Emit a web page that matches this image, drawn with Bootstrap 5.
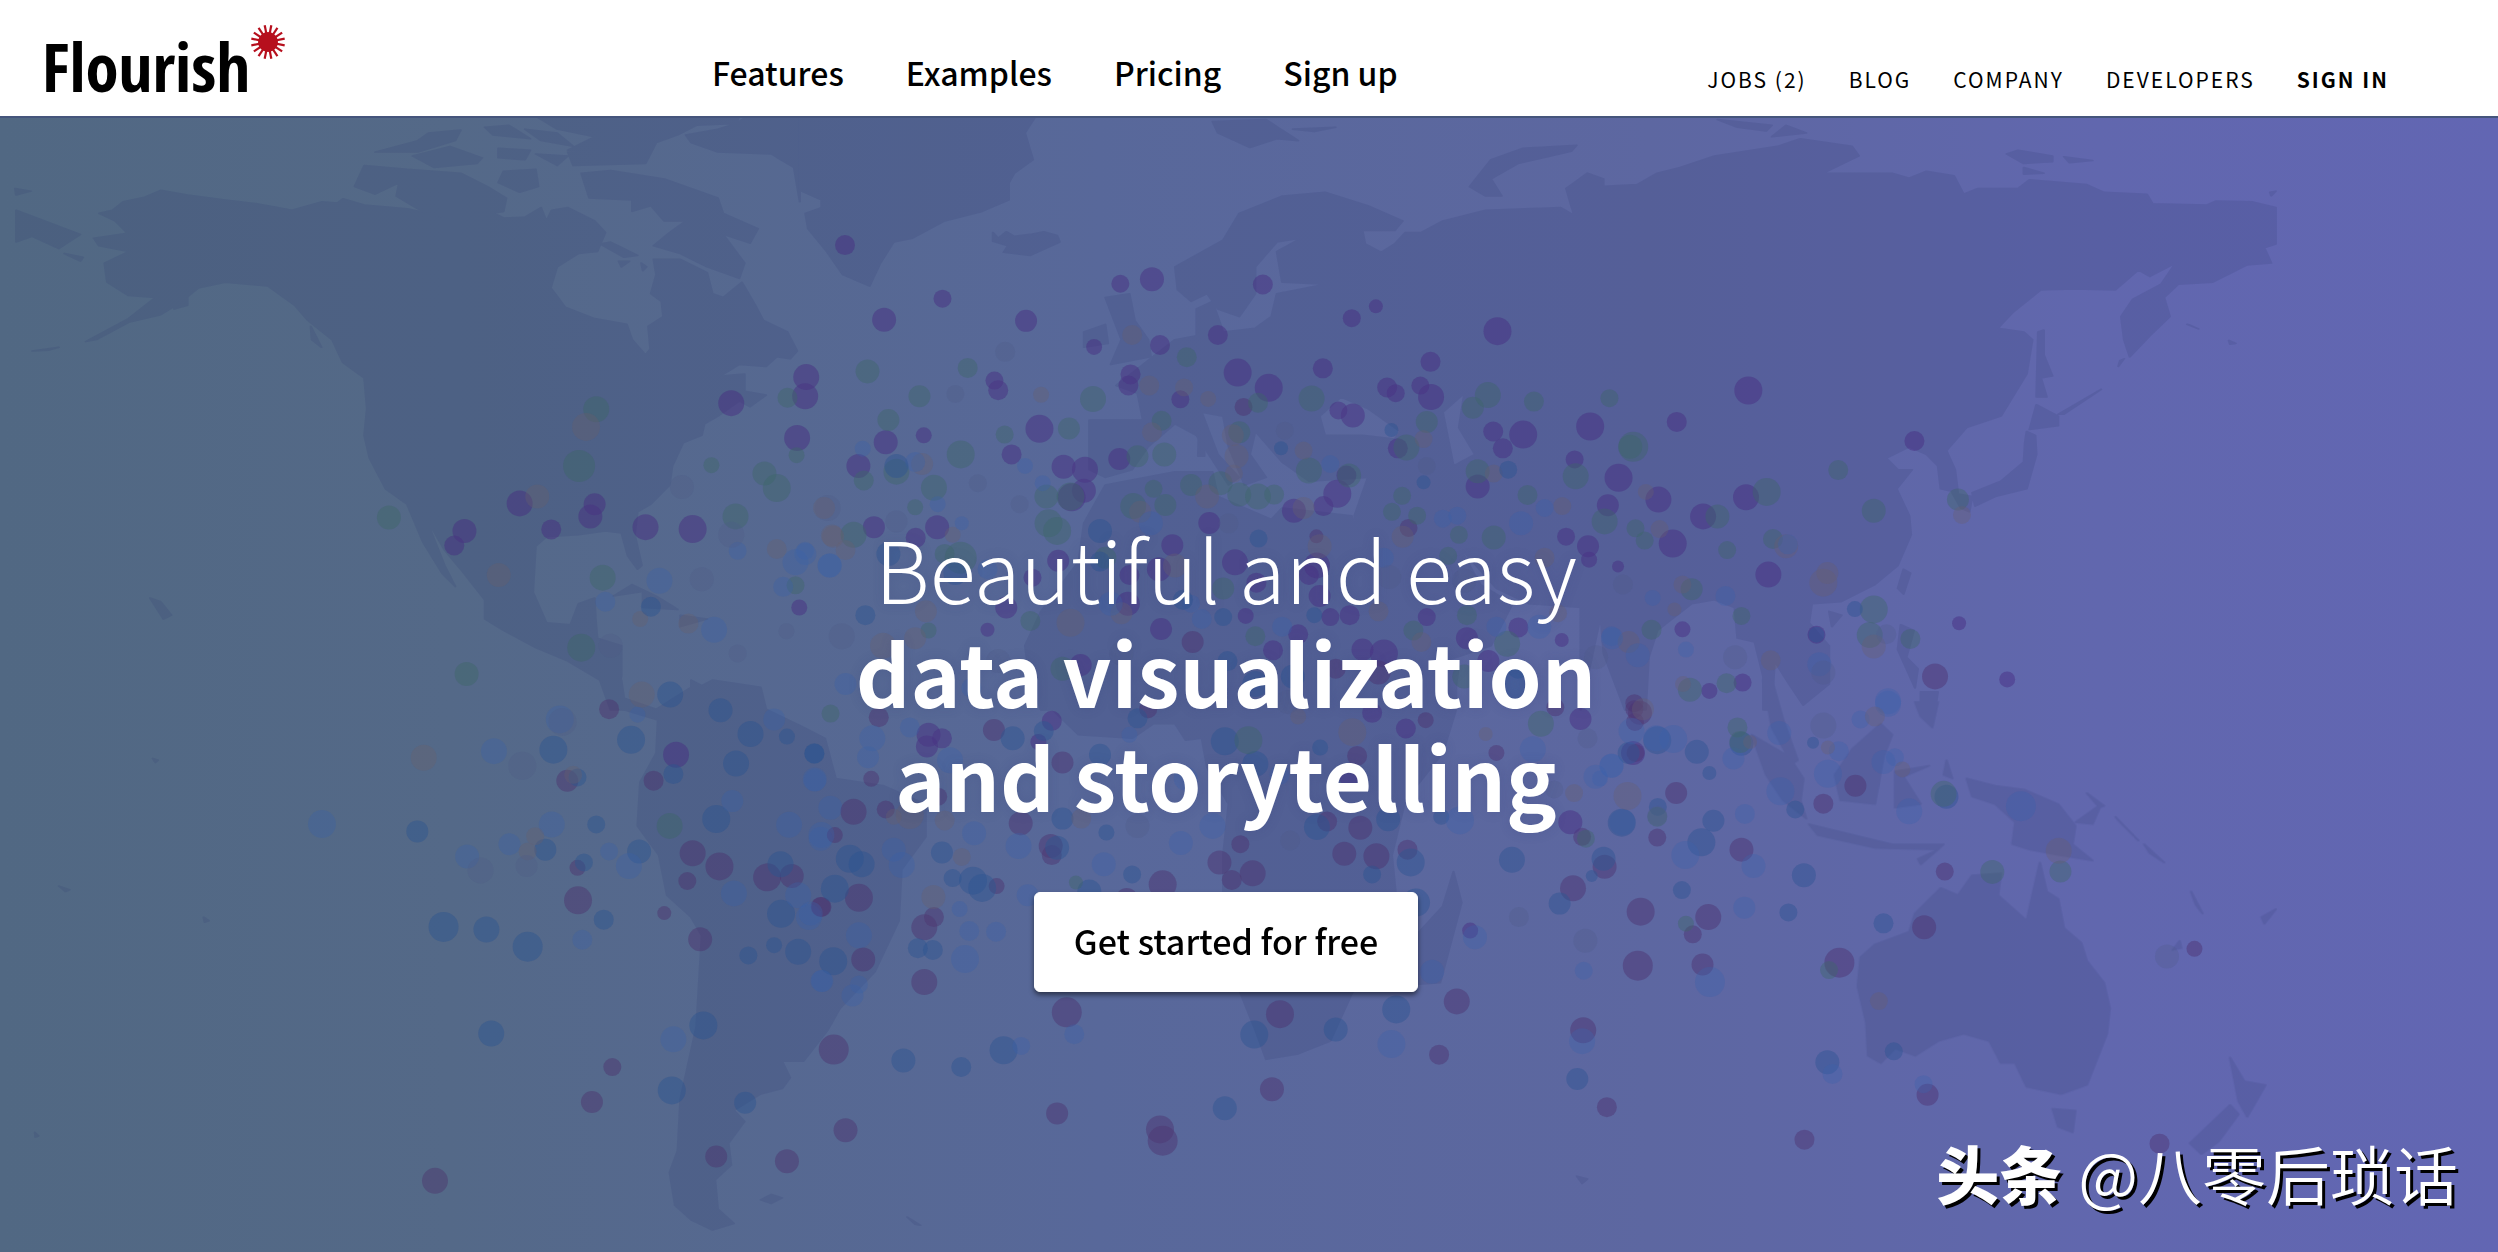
<!DOCTYPE html>
<html lang="en">
<head>
<meta charset="utf-8">
<meta name="viewport" content="width=device-width, initial-scale=1">
<title>Flourish</title>
<link href="https://cdn.jsdelivr.net/npm/bootstrap@5.3.0/dist/css/bootstrap.min.css" rel="stylesheet">
<style>
  body { font-family: "Noto Sans CJK SC", "Noto Sans", sans-serif; color: #000; }
  .site-header { height: 116px; padding: 0 109px 0 42px; }
  .brand-link { width: 670px; height: 116px; color: #000; }
  .brand-link:hover { color: #000; }
  .brand-name { font-family: "Open Sans Condensed", "Roboto Condensed", Roboto, sans-serif; font-weight: 700; font-size: 67px; line-height: 76px; padding-top: 28px; }
  .brand-mark { width: 36px; height: 36px; margin-top: 24px; }
  .main-links { gap: 62px; padding-top: 49px; }
  .main-links .nav-link { font-size: 32px; line-height: 46px; font-weight: 500; color: #000; padding: 0; }
  .side-links { gap: 42px; padding-top: 63px; }
  .side-links .nav-link { font-size: 21px; line-height: 32px; letter-spacing: 2px; color: #000; padding: 0; text-transform: uppercase; }
  .hero { background: linear-gradient(90deg, #516883 0%, #546988 18%, #58689a 44%, #5d67a1 66%, #6167ae 84%, #6266b3 100%); border-top: 2px solid #45557c; padding-right: 46px; }
  .hero-map { inset: 0; }
  .hero-title { font-size: 85px; line-height: 104px; font-weight: 700; margin: 0 0 65px; padding-top: 397px; text-shadow: 0 0 12px rgba(50, 60, 120, .2); }
  .hero-title .thin-line { font-weight: 200; }
  .start-btn, .start-btn:hover { background: #fff; color: #000; font-size: 34px; line-height: 48px; font-weight: 500; padding: 24px 39px 26px; border: 1px solid #fff; border-radius: 6px; box-shadow: 0 3px 5px rgba(0, 0, 0, .5); }
  .credit { right: 40px; bottom: 34px; gap: 16px; font-size: 64px; line-height: 92px; font-weight: 350; text-shadow: 3px 3px 0 #000; }
  .credit strong { font-weight: 900; font-size: 63px; }
</style>
</head>
<body class="d-flex flex-column min-vh-100">
<header class="site-header bg-white d-flex align-items-start">
  <a class="brand-link d-flex align-items-start text-decoration-none flex-shrink-0" href="#" aria-label="Flourish home">
    <span class="brand-name">Flourish</span>
    <svg class="brand-mark" viewBox="-18 -18 36 36" aria-hidden="true">
      <g id="burst" stroke="#b60f1d" stroke-width="2.2"></g>
      <circle r="10" fill="#b60f1d"/>
    </svg>
  </a>
  <nav aria-label="Main"><ul class="nav flex-nowrap main-links">
    <li><a class="nav-link" href="#">Features</a></li>
    <li><a class="nav-link" href="#">Examples</a></li>
    <li><a class="nav-link" href="#">Pricing</a></li>
    <li><a class="nav-link text-nowrap" href="#">Sign up</a></li>
  </ul></nav>
  <nav class="ms-auto" aria-label="Secondary"><ul class="nav flex-nowrap side-links">
    <li><a class="nav-link text-nowrap" href="#">Jobs (2)</a></li>
    <li><a class="nav-link" href="#">Blog</a></li>
    <li><a class="nav-link" href="#">Company</a></li>
    <li><a class="nav-link" href="#">Developers</a></li>
    <li><a class="nav-link fw-bold text-nowrap" href="#">Sign in</a></li>
  </ul></nav>
</header>

<main class="hero flex-grow-1 position-relative text-center text-white overflow-hidden">
  <svg class="hero-map position-absolute w-100 h-100" viewBox="0 118 2498 1134" preserveAspectRatio="xMidYMin slice" aria-hidden="true">
    <g fill="#303c74" stroke="#303c74" stroke-width="4" stroke-linejoin="round" fill-rule="evenodd" opacity=".17">
      <!-- North America and Greenland -->
      <g transform="translate(0 110) scale(.5357 .3827)">
        <path d="M185,270 210,262 230,240 270,228 300,210 350,222 420,235 480,245 545,262 600,240 630,243 640,232 680,248 760,258 800,270 830,282 920,268 940,282 980,280 1010,255 1020,290 1030,262 1060,255 1110,290 1130,320 1115,370 1080,375 1040,410 1028,465 1055,515 1110,545 1170,560 1180,600 1205,640 1214,625 1210,565 1238,540 1235,500 1215,480 1225,430 1220,390 1270,390 1320,425 1330,480 1350,490 1385,450 1410,510 1425,550 1470,580 1488,630 1475,650 1450,645 1430,670 1380,665 1345,695 1390,690 1390,735 1430,745 1400,775 1380,760 1340,800 1315,820 1310,850 1275,870 1255,930 1250,980 1215,1030 1190,1050 1185,1110 1198,1190 1190,1200 1172,1165 1160,1105 1130,1100 1080,1110 1020,1115 1000,1140 995,1260 1020,1340 1065,1345 1080,1290 1110,1275 1112,1330 1115,1380 1160,1400 1160,1480 1150,1530 1165,1568 1140,1568 1120,1490 1060,1440 1000,1405 940,1360 905,1330 905,1280 860,1200 830,1150 795,1065 810,1120 830,1190 850,1245 825,1210 790,1130 760,1030 720,990 690,910 680,850 685,780 680,700 640,660 620,600 575,550 550,510 500,460 420,450 370,465 340,500 300,535 240,555 180,600 160,605 240,545 290,490 240,485 200,450 195,400 240,370 185,355 175,335 238,322 215,290Z"/>
        <path d="M1085,165 1140,158 1240,180 1340,230 1350,270 1415,310 1400,348 1350,325 1390,400 1380,440 1320,410 1270,375 1220,355 1250,320 1280,290 1240,290 1215,250 1180,265 1180,235 1100,230Z M680,145 760,155 860,165 910,200 945,230 940,265 860,285 800,275 740,225 745,190 700,220 662,200Z M940,160 1000,155 1005,200 970,215 930,190Z M700,110 780,80 800,60 860,52 850,80 780,110Z M770,120 840,95 900,125 890,140 810,150Z M905,45 950,40 990,75 920,65Z M930,100 990,105 980,130 930,125Z M1000,115 1060,120 1040,145Z M980,50 1040,60 1070,95 1010,80Z M1000,16 1380,16 1375,35 1300,40 1265,65 1225,85 1205,140 1070,145 1060,110 1200,105 1060,105 1110,70 1040,50Z M1280,65 1340,50 1375,35 1395,16 1493,16 1493,240 1482,150 1440,115 1340,110 1290,85Z"/>
        <path d="M30,262 150,325 110,362 60,330 30,345Z M28,205 58,212 30,222Z M120,375 155,385 150,395Z M325,520 330,500 350,485 350,510Z M580,565 600,620 582,600Z M60,630 110,620 90,628Z M1145,1270 1180,1240 1225,1270 1265,1305 1200,1300 1200,1258Z M1270,1320 1320,1330 1270,1350Z M280,1275 300,1285 320,1320 305,1330Z M1120,350 1140,345 1190,380 1165,385Z M1155,395 1175,395 1160,410Z M1197,400 1207,410 1200,420Z"/>
      </g>
      <!-- Europe, west Asia and north Africa -->
      <g transform="translate(800 110) scale(.5357 .3827)">
        <path d="M0,16 440,16 420,60 435,130 400,165 390,190 390,235 340,265 270,290 210,335 175,345 150,400 130,460 80,430 50,370 15,310 10,270 40,255 40,235 0,210Z M360,320 370,335 385,318 400,330 430,325 455,318 480,328 485,345 430,380 380,372 388,355 360,343Z M770,30 870,25 930,80 890,75 840,98 780,60Z M920,50 1000,45 960,56Z M1250,200 1290,130 1350,100 1450,92 1440,108 1340,140 1290,180 1310,225 1280,225Z M570,490 615,480 625,550 650,600 655,645 580,665 600,600Z M530,580 570,560 575,610 530,620Z M745,810 755,820 755,905 743,905Z"/>
        <path d="M705,470 700,410 790,340 820,270 900,225 980,215 1060,250 1125,290 1110,315 1050,315 1055,350 1085,372 1110,350 1130,320 1160,320 1200,290 1280,262 1420,255 1445,275 1430,205 1470,165 1500,180 1500,280 1515,220 1568,200 1568,1568 1540,1568 1500,1420 1495,1330 1460,1300 1360,1290 1300,1250 1230,1140 1270,1240 1330,1290 1290,1400 1140,1470 1100,1380 1050,1180 1035,1060 1060,960 950,970 900,920 850,840 840,900 870,960 830,980 800,880 790,800 750,790 780,900 820,960 800,980 740,850 700,820 650,880 620,940 570,960 540,940 540,810 640,810 630,740 590,720 700,600 740,590 740,520 770,500 790,580 850,570 880,540 890,480 980,455 900,450 890,370 935,335 890,345 850,410 850,480 820,540 780,520 760,480 730,500Z M980,850 970,800 1010,750 1060,780 1120,840 1110,860 1050,850Z M1200,790 1240,740 1230,830 1260,900 1220,930Z"/>
        <path d="M570,980 700,945 770,945 780,1010 880,1070 900,1040 1030,1060 1060,1180 1120,1390 1150,1460 1230,1450 1225,1500 1210,1568 450,1568 430,1500 420,1400 450,1310 520,1180 530,1080Z"/>
      </g>
      <!-- East Asia -->
      <g transform="translate(1600 110) scale(.5727 .3827)">
        <path d="M65,195 100,165 140,150 200,120 310,95 350,75 440,95 452,120 390,165 510,165 540,178 570,160 618,172 635,220 660,205 730,205 750,182 850,195 880,215 955,220 965,245 1060,248 1075,238 1140,240 1180,255 1180,350 1160,360 1172,400 1130,405 1070,450 1010,455 985,490 995,540 960,590 925,645 915,600 910,540 930,495 980,455 1005,400 960,435 940,418 900,470 830,468 770,470 720,530 695,570 740,580 755,600 745,690 700,800 640,830 605,890 620,940 625,1000 595,990 590,930 570,900 540,880 500,910 520,940 545,940 518,990 540,1060 543,1110 520,1190 480,1240 420,1285 370,1290 365,1340 400,1400 400,1500 355,1555 330,1500 305,1440 300,1568 285,1568 285,1480 270,1390 240,1380 235,1300 200,1280 160,1290 100,1360 85,1430 80,1568 45,1568 20,1430 0,1330 -34,1568 -34,200 0,200Z"/>
        <path d="M765,580 775,575 775,640 790,695 770,700 780,750 762,750Z M762,770 800,800 800,825 750,835Z M745,840 760,850 762,900 745,990 690,1010 655,1035 650,1000 700,970 740,920 742,870Z M615,1000 650,1010 645,1050 630,1040Z M875,730 810,795 800,795Z M915,650 905,670 908,655Z M530,1200 542,1210 530,1265 520,1250Z M525,1345 548,1360 535,1430 555,1460 550,1510 520,1410Z M560,1520 590,1520 585,1568 560,1550Z M400,1310 422,1320 405,1350Z M710,115 730,105 790,120 790,135 740,140Z M810,122 860,132 820,138Z M205,25 300,40 290,55 240,45Z M300,70 325,40 360,60Z M740,150 775,165 740,168Z M1170,215 1180,212 1172,224Z M1025,560 1045,572 1030,562Z M1098,602 1110,610 1100,612Z"/>
      </g>
      <!-- South America -->
      <g transform="translate(0 680) scale(.5357 .3648)">
        <path d="M1125,0 1160,0 1165,50 1225,80 1290,20 1290,0 1310,15 1330,0 1420,20 1430,80 1500,130 1540,160 1560,270 1650,290 1728,340 1728,430 1683,520 1678,660 1633,800 1568,900 1545,960 1500,1045 1460,1045 1475,1090 1460,1120 1420,1135 1370,1180 1390,1210 1360,1270 1365,1330 1335,1370 1340,1450 1370,1490 1330,1508 1290,1480 1260,1440 1250,1350 1265,1290 1270,1150 1300,950 1310,700 1290,650 1245,590 1230,480 1190,400 1195,280 1225,200 1228,110 1160,80Z M1420,1425 1440,1410 1460,1420 1440,1435Z M285,215 295,220 290,226Z M110,565 130,575 122,580Z M65,1240 72,1250 66,1253Z M380,650 390,660 382,664Z"/>
      </g>
      <!-- Southern Africa and Madagascar -->
      <g transform="translate(800 680) scale(.5357 .3648)">
        <path d="M450,0 470,80 520,150 620,160 660,120 700,120 720,165 750,160 760,240 800,340 790,480 790,640 820,850 850,960 870,1040 930,1025 990,990 1030,860 1060,800 1120,700 1105,480 1130,330 1200,200 1225,80 1225,0Z M1220,525 1235,610 1195,830 1150,835 1150,700 1200,620Z M200,1472 225,1495 215,1492Z M1450,1360 1470,1368 1460,1380Z"/>
      </g>
      <!-- South-east Asia and Oceania -->
      <g transform="translate(1600 680) scale(.5727 .3648)">
        <path d="M455,760 480,725 540,690 550,640 595,570 625,590 650,535 700,530 695,590 745,660 755,590 768,500 780,580 800,600 810,680 840,720 850,770 880,830 890,900 885,970 850,1110 805,1135 745,1115 725,1050 700,1050 680,990 635,970 590,990 550,1030 515,1010 490,1050 468,1030 465,940 450,840Z M790,1175 830,1180 825,1240 800,1225Z M1100,1035 1125,1100 1162,1110 1130,1197 1115,1155Z M1100,1165 1115,1190 1080,1265 1050,1300 1030,1270Z"/>
        <path d="M285,0 300,0 320,110 345,220 335,230 300,130Z M265,150 330,210 355,270 350,330 360,380 320,330 290,260Z M365,395 430,420 510,450 600,450 590,465 480,460 380,425Z M440,190 490,120 510,150 495,210 480,340 420,330 410,260Z M515,250 575,235 530,265 560,340 515,350Z M555,490 590,465 560,505Z M605,220 615,270 600,260Z M640,270 690,290 740,300 800,340 830,400 825,450 860,495 800,480 750,465 720,450 725,390 690,340 650,320Z M550,60 590,60 580,130 560,100Z M830,390 875,340 860,395Z M850,310 880,345 872,350Z M900,375 940,440 905,385Z M950,450 985,500 960,475Z M1032,580 1052,640 1040,615Z M1000,740 1012,715 1015,735Z M1155,650 1180,628 1160,668Z M45,0 80,0 75,80 55,90Z"/>
      </g>
    </g>
    <g id="dots" opacity=".8"></g>
  </svg>

  <div class="position-relative">
    <h1 class="hero-title"><span class="thin-line">Beautiful and easy</span><br>data visualization<br>and storytelling</h1>
    <a class="btn start-btn" href="#">Get started for free</a>
  </div>

  <div class="credit position-absolute d-flex text-nowrap"><strong>头条</strong><span>@八零后琐话</span></div>
</main>

<script src="https://cdn.jsdelivr.net/npm/bootstrap@5.3.0/dist/js/bootstrap.bundle.min.js"></script>
<script>
  const NS = 'http://www.w3.org/2000/svg';
  const burst = document.getElementById('burst');
  for (let i = 0; i < 16; i++) {
    const l = document.createElementNS(NS, 'line');
    l.setAttribute('y2', -17);
    l.setAttribute('transform', `rotate(${11.25 + i * 22.5})`);
    burst.append(l);
  }

  // Each region has an origin, a scale, and lists of x,y,radius by colour.
  const colours = {
    purple: ['#46297f', .54], plum: ['#4b2c6a', .5], green: ['#3a6660', .44], brown: ['#6b5d66', .36],
    deep: ['#265290', .48], blue: ['#3562ac', .34], grey: ['#4d5987', .32]
  };
  const regions = [
    { at: [0, 110], scale: [.5357, .3827], dots: {
      purple: '1365,766,13 1505,698,13 1503,748,13 1488,857,13 970,1028,13 1110,1030,11 1102,1062,12 1029,1096,10 867,1100,12 848,1138,10 1205,1090,13 1293,1095,14 1492,1300,8',
      green: '1113,782,13 1081,930,16 726,1065,12 1125,1222,13 1085,1405,14 871,1474,12 1470,752,10 1487,902,8 1328,928,8 1427,950,12 1450,988,14 1373,1062,13 1485,1242,9',
      brown: '1094,828,14 1003,1010,12 931,1215,12 1450,1147,10 1553,1112,11 1195,1330,8 1285,1342,10',
      blue: '1377,1152,9 1485,1182,13 1503,1152,9 1549,1190,12 1231,1230,13 1462,1246,10 1130,1285,10 1333,1358,13',
      deep: '1215,1298,10', grey: '1273,985,12 1365,1110,13 1310,1226,12 1377,1420,9 1140,1400,12 1468,1362,8 1545,1040,13' } },
    { at: [800, 110], scale: [.5357, .3827], dots: {
      purple: '84,353,10 266,493,9 157,548,12 422,551,11 598,454,9 657,442,12 864,456,10 1030,544,9 1075,513,7 1302,578,14 780,588,10 672,614,10 549,619,8 976,675,10 1177,658,10 817,686,14 875,726,14 617,691,10 613,720,10 363,707,9 370,732,10 710,756,9 1096,725,10 1112,740,9 1158,720,9 1178,750,13 1005,785,9 1032,798,12 231,850,8 160,868,12 447,833,14 395,900,10 109,930,12 492,932,12 532,940,13 507,1012,14 530,995,12 596,912,11 1116,884,10 1294,840,10 1350,848,14 1312,884,10 1475,827,14 1446,913,9 1528,961,14 1265,984,12 1003,1003,14 1020,955,10 922,1047,12 977,1035,10 764,1079,11 138,1090,11 256,1090,12 216,1118,10 695,1137,11 482,1178,11 812,1182,13 434,1222,9 615,1215,10 670,1200,12 965,1190,13 852,1235,10 950,1215,10 970,1270,11 1508,1033,11 1430,1115,9 1471,1140,11 1473,1175,8 1527,1193,6 612,1290,12 385,1300,11 350,1358,7 674,1356,11 832,1322,8 990,1325,9 1026,1320,10 1170,1325,9 930,1370,10 883,1412,10 1245,1380,11 1341,1352,10 1422,1385,7 524,1450,11 1090,1420,14 1050,1410,11 1285,1440,11',
      plum: '828,776,9 1136,1092,9 964,1114,7 733,1390,11 1080,1470,12 1000,1460,10',
      green: '126,683,12 313,674,10 223,748,11 165,810,11 547,755,13 722,646,10 855,765,10 955,754,13 1284,745,13 1256,778,11 1370,762,10 1511,753,9 382,848,9 502,832,11 300,900,14 180,945,13 250,987,13 119,968,10 675,812,10 680,900,12 630,905,11 820,842,11 1132,882,13 1170,815,11 950,942,13 1025,955,12 1265,944,12 1448,957,13 1358,1006,10 1550,880,12 460,1010,12 464,1080,14 480,1100,14 505,1010,14 622,1035,13 682,1032,11 730,980,11 785,975,12 820,1005,12 855,1010,13 885,1005,10 660,990,9 215,1038,8 1124,1008,9 1105,1050,9 1152,1060,9 1230,1110,9 1295,1117,12 1502,1075,13 300,1170,16 270,1160,10 100,1110,13 430,1335,10 850,1375,10 790,1250,11 240,1360,8 570,1170,11 1245,1320,10 1145,1360,10 1320,1395,13 1210,1165,9 490,1460,12 1240,1480,12',
      brown: '620,588,10 652,720,10 717,725,9 450,744,8 762,755,8 657,842,10 808,850,11 815,905,12 810,950,9 760,1010,12 228,925,11 45,1040,11 62,1115,11 85,1150,10 285,1110,8 635,1050,11 940,890,9 1164,860,9 1295,950,9 1125,1115,11 1423,1035,9 1390,1170,10 940,1040,11 600,1315,11 505,1340,14 235,1310,11 155,1400,13 215,1380,11 1080,1310,10 1415,1315,9 970,1140,12 700,1190,12 1160,1390,10',
      blue: '10,1160,11 55,1190,12 302,1080,7 215,920,10 117,885,8 420,930,8 453,975,8 257,1030,8 990,925,9 1200,1068,9 1227,1060,9 1346,1080,12 1390,1040,9 1515,1375,10 655,1080,12 580,1290,12 730,1290,9 85,1500,11 320,1510,10 1380,1350,12 1300,1350,10 1090,1170,10 750,1330,10 350,1200,10 900,1350,10',
      deep: '898,884,7 1164,973,7 1322,940,9 180,930,12 122,1320,10 165,1160,12 290,1210,12 856,1120,9 790,1325,9 560,1100,12 1104,836,7 715,1280,10 1338,1500,15 920,1480,12 798,1440,10 850,1500,13 960,1320,8 560,1180,10 1340,1460,10',
      grey: '383,632,10 290,742,9 332,975,9 410,1030,9 905,838,9 1170,930,9 180,1075,11 78,1375,13 800,1080,10 1486,1430,12 370,1440,12 1100,1220,12 1240,1230,12 600,1420,12' } },
    { at: [1600, 110], scale: [.5727, .3827], dots: {
      purple: '259,733,14 134,815,10 549,865,10 255,1012,13 180,1062,13 127,1133,14 294,1214,13 102,1018,13 144,1357,8 627,1341,7 711,1488,8 249,1496,9 191,1518,8 378,1371,9',
      plum: '585,1480,13 60,1550,9',
      green: '58,880,15 416,941,10 291,998,14 478,1047,12 205,1062,12 625,1018,11 302,1121,10 222,1150,9 62,1093,9 78,1125,9 160,1252,11 247,1322,9 478,1305,14 471,1372,13 542,1382,10 90,1358,10 157,1515,12 221,1498,10',
      brown: '632,1058,9 80,998,8 104,1095,9 325,1140,12 390,1235,14 397,1210,11 478,1402,12 144,1240,9 298,1438,10 130,1305,7 50,1390,11 145,1500,8',
      blue: '219,1270,10 92,1275,8 21,1380,11 66,1425,12 150,1410,8 383,1448,12 503,1545,13 328,1135,10',
      deep: '445,1304,8 378,1371,8', grey: '236,1430,12 390,1470,12 500,1370,10 40,1240,10' } },
    { at: [0, 680], scale: [.5357, .3648], dots: {
      plum: '1137,80,10 1059,276,11 1220,276,10 1293,475,13 1343,511,14 1078,515,8 1283,551,9 1432,541,14 1478,537,12 1079,604,14 1240,639,7 1307,711,12 1532,622,10 1143,1061,9 1105,1157,11 812,1373,13 1337,1306,11 1469,1319,12',
      purple: '1262,205,13',
      deep: '1251,40,13 1345,83,12 1401,148,13 1469,155,8 1520,201,10 1178,164,14 1033,191,14 1374,229,13 1078,267,9 1257,258,10 779,415,11 1113,396,9 1337,381,14 1018,465,11 1090,500,9 1193,470,12 1457,505,13 1127,657,10 1458,641,14 1490,745,13 1445,727,8 1397,755,9 828,677,15 908,684,13 985,731,15 917,969,13 1313,947,14 1254,1125,14 1391,1159,11',
      blue: '601,395,14 1045,108,14 922,195,13 1030,396,13 951,450,11 872,484,12 1174,510,13 1137,470,9 1087,712,10 1257,985,13 1370,585,13 1473,397,13 1532,435,12 1367,332,11 1521,273,12 1445,108,11 1190,95,8 1490,590,13 1510,650,13 1535,825,11 1550,350,12',
      brown: '791,213,13 1198,40,13 999,428,9 1070,260,9 985,470,9', green: '1250,400,13',
      grey: '975,235,14 897,522,13 1050,115,14 983,510,11' } },
    { at: [800, 680], scale: [.5357, .3648], dots: {
      plum: '133,271,8 147,102,10 362,137,11 490,226,11 100,361,13 160,355,9 65,425,8 412,393,12 468,455,12 470,480,10 783,500,12 822,450,9 845,530,13 806,548,10 677,560,14 1046,405,12 1016,476,12 1076,483,13 1134,465,10 984,388,10 1443,571,13 1502,512,12 110,597,14 118,766,12 232,828,13 250,650,10 232,678,13 367,565,8 40,622,10 498,911,15 896,916,14 1226,881,13 1193,1027,10 1462,960,13 881,1122,12 480,1188,11 672,1232,14 677,1263,15 85,1234,12 63,1013,15 1300,200,8 1040,208,10 1168,110,8 258,320,9 1460,430,9 610,600,11 1410,75,9 1568,90,12 650,80,9',
      purple: '240,150,12 265,160,10 237,182,11 470,112,10 445,170,8 1457,107,11 1438,390,12 1251,687,8 1068,90,10 1131,133,10 1025,265,10 1555,200,12',
      deep: '27,202,10 455,140,10 397,160,12 490,380,11 480,460,12 93,490,14 115,505,13 265,473,11 285,543,9 323,550,14 340,570,14 65,572,14 62,771,14 220,735,10 248,740,10 620,533,9 572,418,8 540,580,12 380,1015,14 193,1043,12 301,1061,10 848,972,14 1000,958,12 1113,903,14 793,1174,12 1451,1094,11 965,403,13 1098,382,12 1329,493,13 1140,500,14 1068,533,9 1418,613,11 793,168,14 971,185,8 630,105,10 1500,490,12 1478,537,6 1150,610,14 1197,375,8 850,230,13 560,205,11',
      blue: '127,212,11 135,160,13 28,275,11 280,220,13 205,130,10 325,420,12 408,455,13 567,505,12 711,447,12 175,465,12 190,507,13 298,628,8 316,688,10 366,690,10 308,765,14 110,700,13 425,590,11 770,400,13 1232,385,14 1260,705,12 1463,797,9 1104,998,14 1460,990,13 512,971,10 413,1003,9 98,865,11 40,825,11 1368,190,13 1535,390,13 1485,265,12 1515,235,12 40,425,13 615,150,8 20,640,12 895,260,10 1180,800,12 720,270,12 110,835,9',
      brown: '302,485,9 249,595,12 270,385,10 205,370,14 525,380,10 1031,143,14 1280,148,7 1445,310,9 930,100,8 175,375,8',
      green: '57,92,9 515,555,7 837,165,14 1383,120,13 1467,435,9',
      grey: '630,400,12 1342,650,10 1466,715,12 1408,300,9 915,440,10 910,60,12 1470,160,10' } },
    { at: [1600, 680], scale: [.5727, .3648], dots: {
      plum: '60,80,9 133,310,11 390,339,10 446,290,11 100,432,9 247,465,12 602,525,9 71,635,14 189,650,13 162,697,9 66,783,15 179,780,11 418,775,15 566,678,12 1038,737,8 572,1137,11 12,1171,10 357,1260,10 977,1271,10 62,200,9 61,115,9',
      deep: '100,165,14 169,197,12 191,255,7 247,175,12 50,200,11 101,348,9 38,391,14 198,386,11 177,445,14 341,355,9 356,535,12 143,576,9 329,637,9 495,667,10 397,1048,12 513,1018,9 372,172,6 605,320,12',
      blue: '128,162,14 98,160,13 313,145,12 503,65,13 455,108,9 417,195,10 515,212,9 495,225,12 398,257,14 233,215,11 315,305,14 149,480,14 268,510,12 253,367,10 252,624,11 192,828,15 540,360,13 735,346,15 406,1080,10 565,1108,9 20,235,12 55,140,13 0,270,8',
      green: '240,130,10 245,170,11 600,312,13 685,526,12 804,525,11 150,668,8 100,375,10 400,795,9',
      brown: '48,318,14 801,468,13 398,185,7 480,100,10 528,245,8 487,880,9 262,170,7 75,80,11',
      grey: '390,125,13 990,758,12 100,372,10' } }
  ];
  const layer = document.getElementById('dots');
  for (const { at, scale, dots } of regions) {
    for (const [name, list] of Object.entries(dots)) {
      for (const item of list.split(' ')) {
        const [x, y, r] = item.split(',').map(Number);
        const c = document.createElementNS(NS, 'circle');
        c.setAttribute('cx', at[0] + x * scale[0]);
        c.setAttribute('cy', at[1] + y * scale[1]);
        c.setAttribute('r', r);
        c.setAttribute('fill', colours[name][0]);
        c.setAttribute('fill-opacity', colours[name][1]);
        layer.append(c);
      }
    }
  }
</script>
</body>
</html>
